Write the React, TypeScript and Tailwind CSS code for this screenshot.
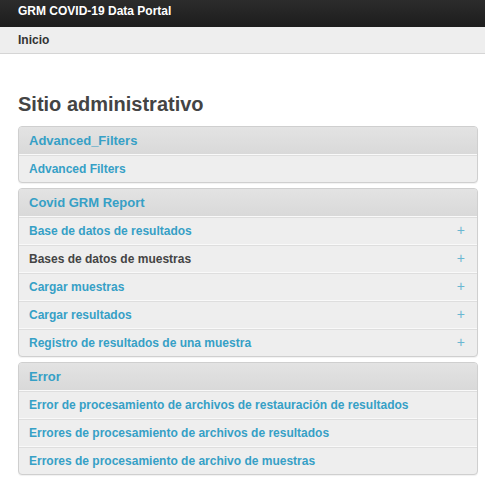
import React from "react";

type Item = { label: string; plus?: boolean; muted?: boolean };
type Group = { title: string; items: Item[] };

const groups: Group[] = [
  { title: "Advanced_Filters", items: [{ label: "Advanced Filters" }] },
  {
    title: "Covid GRM Report",
    items: [
      { label: "Base de datos de resultados", plus: true },
      { label: "Bases de datos de muestras", plus: true, muted: true },
      { label: "Cargar muestras", plus: true },
      { label: "Cargar resultados", plus: true },
      { label: "Registro de resultados de una muestra", plus: true },
    ],
  },
  {
    title: "Error",
    items: [
      { label: "Error de procesamiento de archivos de restauración de resultados" },
      { label: "Errores de procesamiento de archivos de resultados" },
      { label: "Errores de procesamiento de archivo de muestras" },
    ],
  },
];

const Panel: React.FC<{ group: Group }> = ({ group }) => {
  return (
    <div className="mb-[5px] overflow-hidden rounded-[4px] border border-[#cfcfcf] bg-[#eeeeee] shadow-[0_1px_1px_rgba(0,0,0,0.06)]">
      <div className="flex h-[27px] items-center bg-gradient-to-b from-[#e3e3e3] to-[#d9d9d9] px-[10px] pt-[1px] text-[13px] font-bold text-[#36a0c6]">
        {group.title}
      </div>
      {group.items.map((item, index) => (
        <div
          key={index}
          className="flex h-[28px] items-center justify-between border-t border-[#f9f9f9] px-[10px] shadow-[inset_0_1px_0_#dedede]"
        >
          <span className={`text-[12px] font-bold ${item.muted ? "text-[#444444]" : "text-[#36a0c6]"}`}>
            {item.label}
          </span>
          {item.plus && <span className="mr-[2px] text-[14px] font-normal text-[#6ab7d2]">+</span>}
        </div>
      ))}
    </div>
  );
};

export default function App() {
  return (
    <div className="min-h-screen bg-white" style={{ fontFamily: '"Liberation Sans", Arial, sans-serif' }}>
      <div className="h-[27px] bg-gradient-to-b from-[#2c2c2c] to-[#1d1d1d] px-[18px] pt-[3px] text-[12px] leading-[16px] font-bold text-white">
        GRM COVID-19 Data Portal
      </div>
      <div className="flex h-[27px] items-center border-b border-[#d5d5d5] bg-[#eeeeee] px-[18px] text-[12px] font-bold text-[#333333]">
        Inicio
      </div>
      <div className="pl-[18px] pr-[7px]">
        <h1 className="mt-[39px] mb-[11px] text-[20px] leading-[22px] font-bold text-[#444444]">Sitio administrativo</h1>
        {groups.map((group) => (
          <Panel key={group.title} group={group} />
        ))}
      </div>
    </div>
  );
}
